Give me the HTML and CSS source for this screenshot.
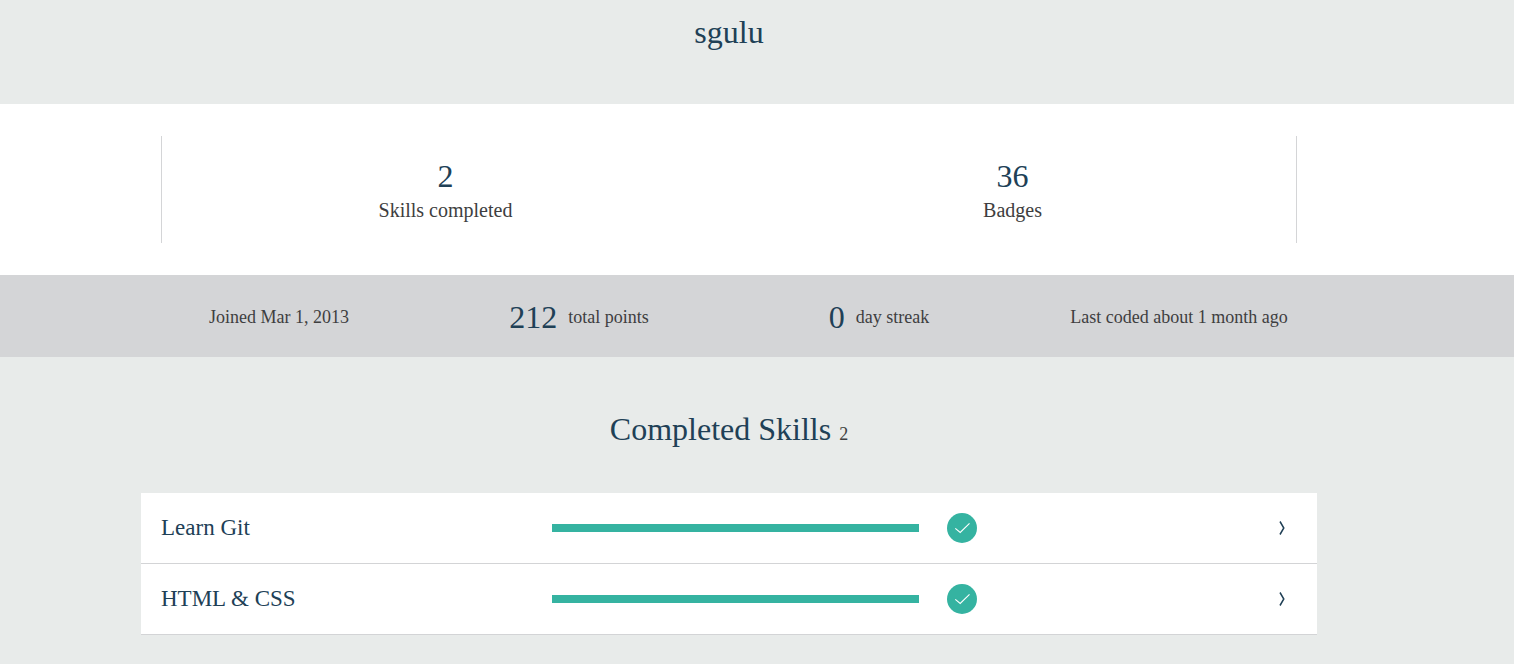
FILE: index.html
```html
<!DOCTYPE html>
<html lang="en">
<head>
<meta charset="utf-8">
<title>sgulu</title>
<link rel="stylesheet" href="styles.css">
</head>
<body>
<header class="profile"><h1 class="profile-name">sgulu</h1></header>
<section class="summary">
  <div class="summary-row">
    <div class="stat"><strong class="number">2</strong><span class="stat-label">Skills completed</span></div>
    <div class="stat"><strong class="number">36</strong><span class="stat-label">Badges</span></div>
  </div>
</section>
<section class="activity">
  <div class="activity-row">
    <p class="fact">Joined Mar 1, 2013</p>
    <p class="fact"><strong class="number">212</strong>total points</p>
    <p class="fact"><strong class="number">0</strong>day streak</p>
    <p class="fact">Last coded about 1 month ago</p>
  </div>
</section>
<main class="skills">
  <h2 class="skills-title">Completed Skills <small class="skills-count">2</small></h2>
  <a class="skill" href="#git">
    <span class="skill-name">Learn Git</span>
    <span class="bar"></span>
    <span class="skill-end">
      <svg class="check" viewBox="0 0 30 30" aria-hidden="true"><circle cx="15" cy="15" r="15" fill="#35b3a1"/><path d="M8.300 15.300l4.900 4.200 9.300-9.200" fill="none" stroke="#fff" stroke-width="1.100"/></svg>
      <svg class="chevron" viewBox="0 0 6 14" aria-hidden="true"><path d="M1 0.500L4.800 7 1 13.500" fill="none" stroke="#204056" stroke-width="1.500"/></svg>
    </span>
  </a>
  <a class="skill" href="#html">
    <span class="skill-name">HTML &amp; CSS</span>
    <span class="bar"></span>
    <span class="skill-end">
      <svg class="check" viewBox="0 0 30 30" aria-hidden="true"><circle cx="15" cy="15" r="15" fill="#35b3a1"/><path d="M8.300 15.300l4.900 4.200 9.300-9.200" fill="none" stroke="#fff" stroke-width="1.100"/></svg>
      <svg class="chevron" viewBox="0 0 6 14" aria-hidden="true"><path d="M1 0.500L4.800 7 1 13.500" fill="none" stroke="#204056" stroke-width="1.500"/></svg>
    </span>
  </a>
</main>
</body>
</html>
```
FILE: styles.css
```css
* { box-sizing: border-box; }
body {
  margin: 0;
  padding: 0;
  background: #e8ebea;
  color: #3e3e40;
  font-family: "Liberation Serif", "Times New Roman", serif;
  font-size: 18px;
}
h1, h2, p { margin: 0; }
.profile, .summary, .activity, .skills { padding-right: 56px; }
.profile { padding-top: 12px; padding-bottom: 52px; }
.profile-name, .skills-title {
  color: #204056;
  font-size: 32px;
  font-weight: 400;
  line-height: 40px;
  text-align: center;
}
.summary { padding-top: 32px; padding-bottom: 32px; background: #fff; }
.summary-row {
  display: grid;
  grid-template-columns: 1fr 1fr;
  max-width: 1136px;
  margin: 0 auto;
  padding: 20px 0 19px;
  border: solid #d4d5d7;
  border-width: 0 1px;
}
.stat { display: flex; flex-direction: column; align-items: center; }
.number { color: #204056; font-size: 32px; font-weight: 400; line-height: 40px; }
.stat-label { font-size: 20px; line-height: 28px; }
.activity { padding-top: 22px; padding-bottom: 20px; background: #d4d5d7; }
.activity-row {
  display: grid;
  grid-template-columns: repeat(4, 1fr);
  max-width: 1200px;
  margin: 0 auto;
}
.fact { display: flex; align-items: center; justify-content: center; gap: 11px; }
.skills { padding-top: 52px; padding-bottom: 29px; }
.skills-title { margin-bottom: 44px; }
.skills-count { color: #3e3e40; font-size: 18px; line-height: 20px; }
.skill {
  display: grid;
  grid-template-columns: 391fr 367fr 378fr;
  align-items: center;
  max-width: 1176px;
  margin: 0 auto;
  padding: 20px;
  border-bottom: 1px solid #d3d4d6;
  background: #fff;
  color: #204056;
  text-decoration: none;
}
.skill-name { font-size: 23px; line-height: 30px; }
.bar { height: 8px; background: #35b3a1; }
.skill-end {
  display: flex;
  align-items: center;
  justify-content: space-between;
  padding: 0 12px 0 28px;
}
.check { width: 30px; height: 30px; }
.chevron { width: 6px; height: 14px; }
```
